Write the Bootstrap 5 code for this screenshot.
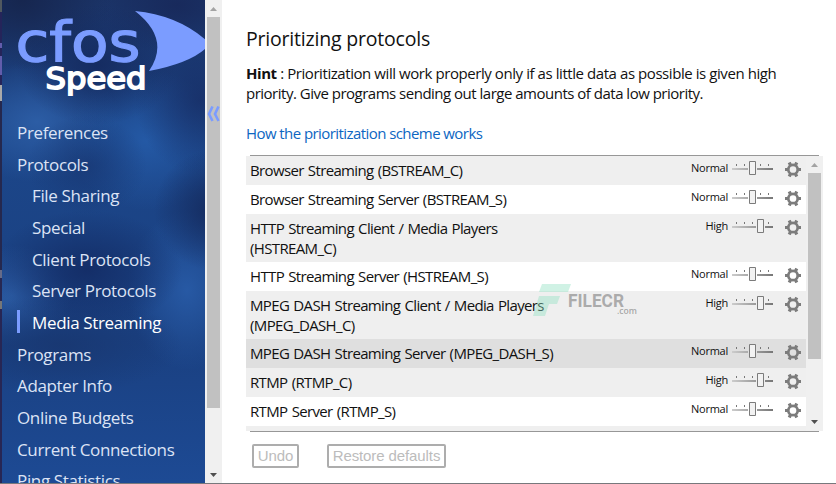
<!DOCTYPE html>
<html lang="en">
<head>
<meta charset="utf-8">
<meta name="viewport" content="width=device-width, initial-scale=1">
<title>cFosSpeed - Prioritizing protocols</title>
<link href="https://cdn.jsdelivr.net/npm/bootstrap@5.3.0/dist/css/bootstrap.min.css" rel="stylesheet">
<style>
body{font-family:"Open Sans","Noto Sans",sans-serif;font-size:15px;line-height:20px;color:#111;background:#fff}
.app{width:836px;height:484px;border-bottom:1px solid #77787c}
.edge{width:2px;background:linear-gradient(#50585f 0 12px,#25245a 12px 43px,#625dac 43px 48px,#25245a 48px 56px,#625dac 56px 75px,#25245a 75px 85px,#aaa 85px 101px,#25284e 101px 270px,#666b88 270px 278px,#272852 278px 301px,#777 301px 309px,#272654 309px)}
.side{width:203px;background:
 radial-gradient(ellipse 58px 60px at 210px 210px,#152c60,#152c6000),
 radial-gradient(ellipse 65px 75px at 198px 100px,#172e66cc,#172e6600),
 radial-gradient(ellipse 80px 60px at 95px 65px,#14285cd0,#14285c00),
 radial-gradient(ellipse 90px 70px at 20px 0px,#16264f,#16264f00),
 radial-gradient(ellipse 80px 50px at 175px 5px,#182a5c,#182a5c00),
 radial-gradient(ellipse 95px 60px at 85px 270px,#142e68,#142e6800),
 radial-gradient(ellipse 120px 50px at 60px 345px,#18366fcc,#18366f00),
 radial-gradient(ellipse 60px 50px at 85px 165px,#173570aa,#17357000),
 radial-gradient(ellipse 60px 50px at 10px 295px,#2b5ba3,#2b5ba300),
 radial-gradient(ellipse 80px 70px at 145px 140px,#2459a5,#2459a500),
 radial-gradient(ellipse 60px 80px at 185px 290px,#2759a4,#2759a400),
 radial-gradient(ellipse 85px 60px at 35px 122px,#2c5da5,#2c5da500),
 linear-gradient(#1b3468,#1c4689 30%,#1a4081 70%,#1d4a94)}
.brand-art{height:117px}
.menu .nav-link{padding:0 0 0 15px;height:31.67px;line-height:31.67px;font-size:17px;color:#dce3f5;white-space:nowrap;letter-spacing:-.35px}
.menu .sub{padding-left:30px}
.menu .active{color:#fff}
.menu .active::before{content:"";display:block;float:left;width:3px;height:23px;margin:3px 12px 0 -15px;background:#7b9cff}
.sbar{width:17px;background:#f0f0f0;flex:none}
.sbar svg{display:block;flex:none}
.thumb{width:13px;background:#c1c1c1}
.collapse-mark{position:absolute;left:207px;top:106px}
.main-pane{padding:26px 0 0 24px}
h1{font-size:19.5px;line-height:26px;font-weight:400;letter-spacing:-.2px;margin:0 0 11px}
.hint{letter-spacing:-.43px;height:40px;white-space:nowrap}
.hint-end{letter-spacing:-.5px}
.guide{color:#0d66c2;text-decoration:none;letter-spacing:-.57px;line-height:20px;margin:20px 0 11px}
.rule{height:1px;background:#979797;width:569px;margin-left:4px}
.table-box{height:275px;width:577px}
.prow{min-height:29px;padding:4px 5px 4px 4px;letter-spacing:-.64px;word-spacing:.9px;flex:none}
.prow:nth-child(odd){background:#efefef}
.prow.hovered{background:#dfdfdf}
.pname{width:330px}
.level{font-size:11px;letter-spacing:-.25px;line-height:16px;margin-right:4px}
.ctl{flex:none}
.footer-actions{padding:12px 0 0 6px;gap:28px;height:51px}
.btn-old{font:15px/18px "Liberation Sans",sans-serif;letter-spacing:-.1px;color:#bcbcbc;border:2px solid #adadad;border-radius:2px;height:24px;padding:0;background:#fff;text-align:center}
.watermark{position:absolute;left:530px;top:282px;pointer-events:none}
.defs{position:absolute;width:0;height:0}
</style>
<script src="https://cdn.jsdelivr.net/npm/bootstrap@5.3.0/dist/js/bootstrap.bundle.min.js"></script>
</head>
<body class="overflow-hidden">
<svg class="defs">
 <defs>
  <linearGradient id="track" gradientUnits="userSpaceOnUse" x1="0" y1="0" x2="41" y2="0"><stop stop-color="#ccc"/><stop offset="1" stop-color="#777"/></linearGradient>
 </defs>
 <symbol id="ticks" viewBox="0 0 41 16"><path d="M4 0h1v2h-1zM12 0h1v2h-1zM20 0h1v2h-1zM28 0h1v2h-1zM36 0h1v2h-1z" fill="#777"/><path d="M0 4h16v2H0zM25 4h16v2H25z" fill="url(#track)"/></symbol>
 <symbol id="ticks-high" viewBox="0 0 41 16"><path d="M4 0h1v2h-1zM12 0h1v2h-1zM20 0h1v2h-1zM28 0h1v2h-1zM36 0h1v2h-1z" fill="#777"/><path d="M0 4h24v2H0zM33 4h8v2H33z" fill="url(#track)"/></symbol>
 <symbol id="gear" viewBox="0 0 16 16"><g fill="none" stroke="#7c7c7c"><circle cx="8" cy="8" r="4.700" stroke-width="2.700"/><path d="M0 8h3M13 8h3M4.200 1.100l1.300 2.500M10.500 12.400l1.300 2.500M11.800 1.100l-1.300 2.500M5.500 12.400L4.200 14.900" stroke-width="3.200"/></g></symbol>
 <symbol id="normal" viewBox="0 0 69 18"><use href="#ticks" y="4" width="41" height="16"/><path d="M17.500 1.500h6v13h-6z" fill="#f2f2f2" stroke="#7b7b7b"/><use href="#gear" x="53" y="1.500" width="16" height="16"/></symbol>
 <symbol id="high" viewBox="0 0 69 18"><use href="#ticks-high" y="4" width="41" height="16"/><path d="M25.500 1.500h6v13h-6z" fill="#f2f2f2" stroke="#7b7b7b"/><use href="#gear" x="53" y="1.500" width="16" height="16"/></symbol>
</svg>
<div class="app d-flex position-relative overflow-hidden">
 <div class="edge"></div>
 <aside class="side d-flex flex-column overflow-hidden flex-shrink-0">
  <svg class="brand-art flex-shrink-0" width="203" height="117" viewBox="2 0 203 117">
   <path d="M135 11Q177 15 206 40V48Q190 63 149 71Q171 39 135 11Z" fill="#7b9cff"/>
   <text x="15.500" y="61" font-family="DejaVu Sans" font-size="55" fill="#7b9cff" stroke="#7b9cff" stroke-width="1.200" textLength="125" lengthAdjust="spacingAndGlyphs">cfos</text>
   <text x="45.500" y="88.500" font-family="DejaVu Sans" font-weight="400" font-size="31" fill="#fff" stroke="#fff" stroke-width="1.800" textLength="101" lengthAdjust="spacingAndGlyphs">Speed</text>
  </svg>
  <nav class="menu nav flex-column flex-nowrap">
   <a class="nav-link" href="#">Preferences</a>
   <a class="nav-link" href="#">Protocols</a>
   <a class="nav-link sub" href="#">File Sharing</a>
   <a class="nav-link sub" href="#">Special</a>
   <a class="nav-link sub" href="#">Client Protocols</a>
   <a class="nav-link sub" href="#">Server Protocols</a>
   <a class="nav-link sub active" href="#">Media Streaming</a>
   <a class="nav-link" href="#">Programs</a>
   <a class="nav-link" href="#">Adapter Info</a>
   <a class="nav-link" href="#">Online Budgets</a>
   <a class="nav-link" href="#">Current Connections</a>
   <a class="nav-link" href="#">Ping Statistics</a>
  </nav>
 </aside>
 <div class="sbar d-flex flex-column align-items-center justify-content-between">
  <svg width="17" height="17"><path d="M5 11l3.500-4 3.500 4z" fill="#a3a3a3"/></svg>
  <div class="thumb mb-auto" style="height:391px"></div>
  <svg width="17" height="17"><path d="M5 7h7l-3.500 4z" fill="#505050"/></svg>
 </div>
 <svg class="collapse-mark" width="13" height="16"><path d="M5.500 .500L2 8l3.500 7M11.500 .500L8 8l3.500 7" fill="none" stroke="#7b9cff" stroke-width="2.600"/></svg>

 <main class="main-pane d-flex flex-column">
  <h1>Prioritizing protocols</h1>
  <div class="hint"><b>Hint</b> : Prioritization will work properly only if as little data as possible is given high<br><span class="hint-end">priority. Give programs sending out large amounts of data low priority.</span></div>
  <a class="guide d-block" href="#">How the prioritization scheme works</a>
  <div class="rule mt-auto"></div>
  <div class="table-box d-flex">
   <div class="flex-grow-1 d-flex flex-column overflow-hidden">
    <div class="prow d-flex"><div class="pname">Browser Streaming (BSTREAM_C)</div><span class="level ms-auto">Normal</span><svg class="ctl" width="69" height="18"><use href="#normal"/></svg></div>
    <div class="prow d-flex"><div class="pname">Browser Streaming Server (BSTREAM_S)</div><span class="level ms-auto">Normal</span><svg class="ctl" width="69" height="18"><use href="#normal"/></svg></div>
    <div class="prow d-flex"><div class="pname">HTTP Streaming Client / Media Players<br>(HSTREAM_C)</div><span class="level ms-auto">High</span><svg class="ctl" width="69" height="18"><use href="#high"/></svg></div>
    <div class="prow d-flex"><div class="pname">HTTP Streaming Server (HSTREAM_S)</div><span class="level ms-auto">Normal</span><svg class="ctl" width="69" height="18"><use href="#normal"/></svg></div>
    <div class="prow d-flex"><div class="pname">MPEG DASH Streaming Client / Media Players<br>(MPEG_DASH_C)</div><span class="level ms-auto">High</span><svg class="ctl" width="69" height="18"><use href="#high"/></svg></div>
    <div class="prow hovered d-flex"><div class="pname">MPEG DASH Streaming Server (MPEG_DASH_S)</div><span class="level ms-auto">Normal</span><svg class="ctl" width="69" height="18"><use href="#normal"/></svg></div>
    <div class="prow d-flex"><div class="pname">RTMP (RTMP_C)</div><span class="level ms-auto">High</span><svg class="ctl" width="69" height="18"><use href="#high"/></svg></div>
    <div class="prow d-flex"><div class="pname">RTMP Server (RTMP_S)</div><span class="level ms-auto">Normal</span><svg class="ctl" width="69" height="18"><use href="#normal"/></svg></div>
    <div class="prow"></div>
   </div>
   <div class="sbar d-flex flex-column align-items-center">
    <svg width="17" height="17"><path d="M5 11l3.500-4 3.500 4z" fill="#a3a3a3"/></svg>
    <div class="thumb mb-auto" style="height:186px"></div>
    <svg width="17" height="17"><path d="M5 6h7l-3.500 4z" fill="#505050"/></svg>
   </div>
  </div>
  <div class="rule"></div>
  <div class="d-flex footer-actions">
   <button class="btn-old" style="width:47px">Undo</button>
   <button class="btn-old" style="width:119px">Restore defaults</button>
  </div>
 </main>
 <svg class="watermark" width="110" height="38">
  <path d="M11 2h29l-3 8H8zM8 14h21l-3 8h-8l-4 12H2z" fill="#8edfc0" opacity=".42" transform="translate(1)"/>
  <text x="38" y="24.500" font-family="Roboto" font-weight="700" font-size="18" fill="#999" fill-opacity=".8" textLength="56" lengthAdjust="spacingAndGlyphs">FILECR</text>
  <text x="87" y="32" font-family="Open Sans" font-weight="600" font-size="9" fill="#999" fill-opacity=".85" textLength="20" lengthAdjust="spacingAndGlyphs">.com</text>
 </svg>
</div>
</body>
</html>
